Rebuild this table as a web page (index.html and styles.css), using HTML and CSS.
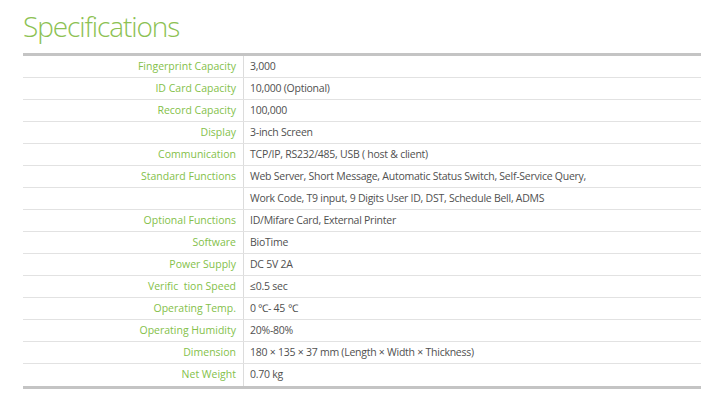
FILE: index.html
```html
<!DOCTYPE html>
<html>
<head>
<meta charset="utf-8">
<link rel="stylesheet" href="styles.css">
</head>
<body>
<div class="page">
  <h1 class="title">Specifications</h1>
  <div class="specs">
    <div class="row"><div class="label">Fingerprint Capacity</div><div class="value">3,000</div></div>
    <div class="row"><div class="label">ID Card Capacity</div><div class="value">10,000 (Optional)</div></div>
    <div class="row"><div class="label">Record Capacity</div><div class="value">100,000</div></div>
    <div class="row"><div class="label">Display</div><div class="value">3-inch Screen</div></div>
    <div class="row"><div class="label">Communication</div><div class="value">TCP/IP, RS232/485, USB ( host &amp; client)</div></div>
    <div class="row"><div class="label">Standard Functions</div><div class="value">Web Server, Short Message, Automatic Status Switch, Self-Service Query,</div></div>
    <div class="row"><div class="label"></div><div class="value">Work Code, T9 input, 9 Digits User ID, DST, Schedule Bell, ADMS</div></div>
    <div class="row"><div class="label">Optional Functions</div><div class="value">ID/Mifare Card, External Printer</div></div>
    <div class="row"><div class="label">Software</div><div class="value">BioTime</div></div>
    <div class="row"><div class="label">Power Supply</div><div class="value">DC 5V 2A</div></div>
    <div class="row"><div class="label">Verific&nbsp;&nbsp;tion Speed</div><div class="value">≤0.5 sec</div></div>
    <div class="row"><div class="label">Operating Temp.</div><div class="value">0 ℃- 45 ℃</div></div>
    <div class="row"><div class="label">Operating Humidity</div><div class="value">20%-80%</div></div>
    <div class="row"><div class="label">Dimension</div><div class="value">180 × 135 × 37 mm (Length × Width × Thickness)</div></div>
    <div class="row last"><div class="label">Net Weight</div><div class="value">0.70 kg</div></div>
  </div>
</div>
</body>
</html>
```
FILE: styles.css
```css
html, body {
  margin: 0;
  padding: 0;
  background: #ffffff;
}
.page {
  padding: 8px 10px 0 23px;
  font-family: "Open Sans", "Liberation Sans", sans-serif;
}
.title {
  margin: 0 0 9px 0;
  font-family: "Open Sans", sans-serif;
  font-weight: 300;
  font-size: 28px;
  line-height: 36px;
  color: #8cc152;
  letter-spacing: -1.1px;
}
.specs {
  border-top: 3px solid #c4c4c4;
  border-bottom: 3px solid #c4c4c4;
  width: 678px;
}
.row {
  display: grid;
  grid-template-columns: 221px 1fr;
  height: 22px;
  border-bottom: 1px solid #e2e2e2;
  box-sizing: border-box;
  font-size: 10.5px;
}
.row.last {
  border-bottom: none;
}
.label {
  text-align: right;
  color: #84bf4a;
  padding-right: 7px;
  padding-bottom: 2px;
  border-right: 1px solid #dcdcdc;
  display: flex;
  align-items: center;
  justify-content: flex-end;
}
.value {
  color: #505050;
  padding-left: 6px;
  padding-bottom: 2px;
  display: flex;
  align-items: center;
  white-space: nowrap;
  letter-spacing: -0.25px;
}
```
